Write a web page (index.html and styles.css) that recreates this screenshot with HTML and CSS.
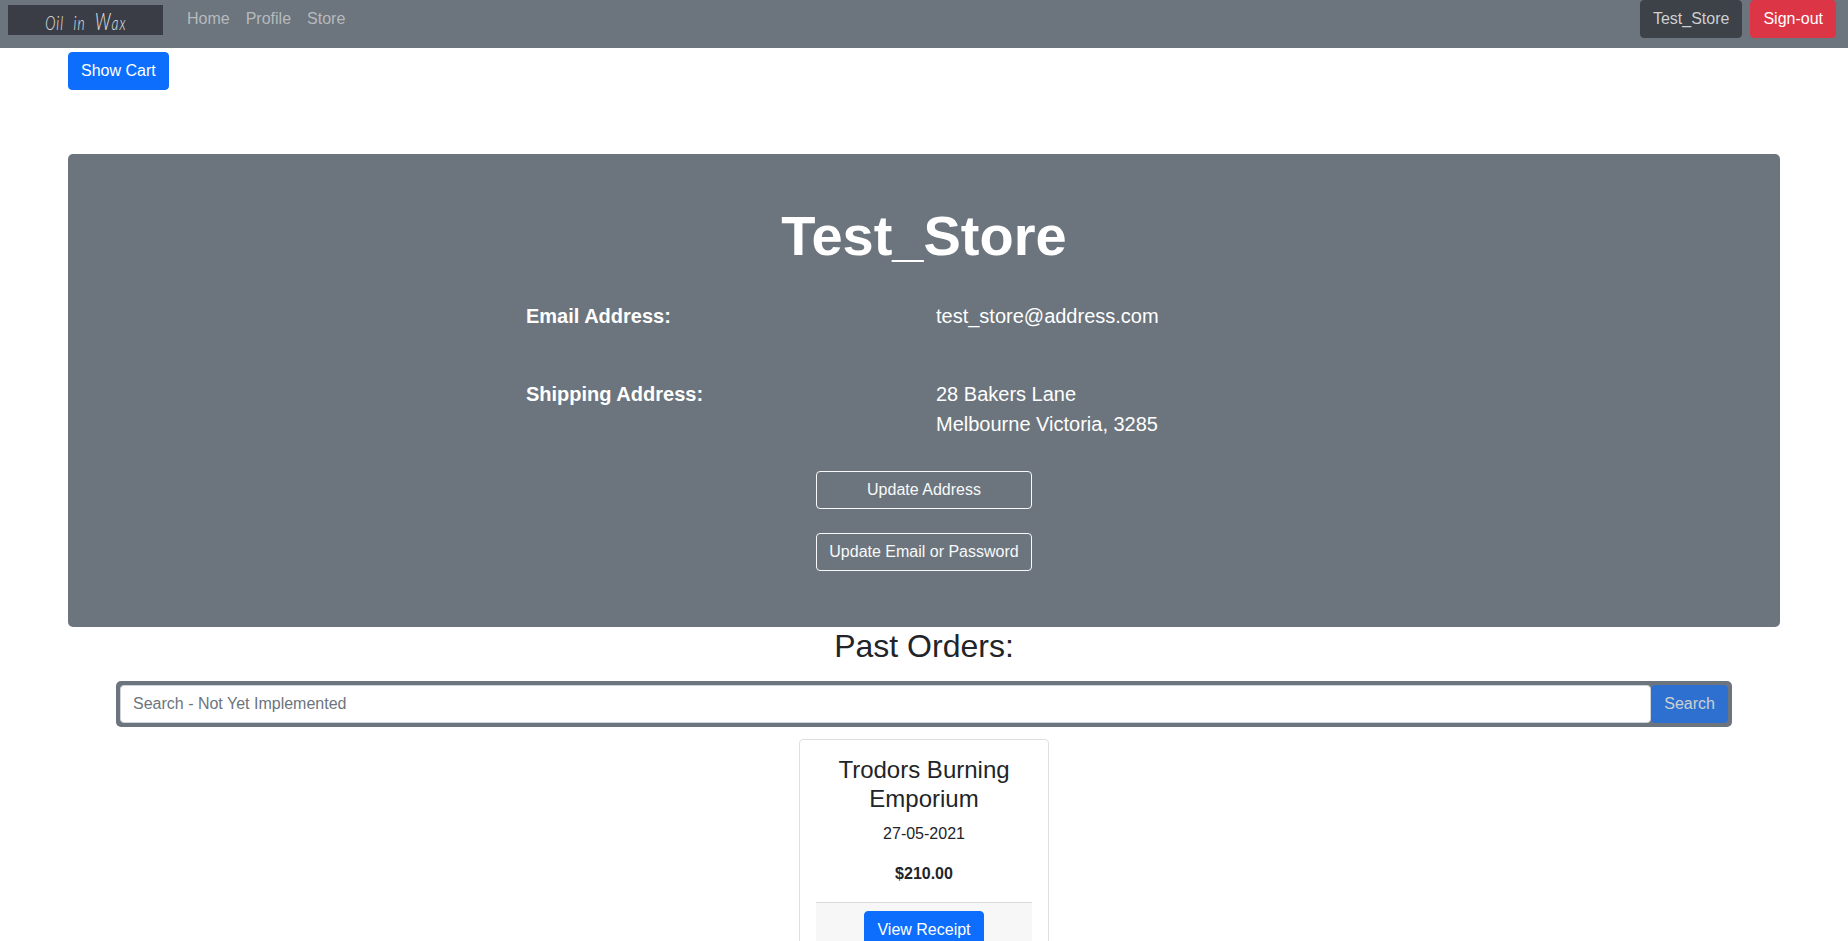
FILE: index.html
```
<!DOCTYPE html>
<html lang="en">
<head>
<meta charset="utf-8">
<title>Oil in Wax - Profile</title>
<link rel="stylesheet" href="styles.css">
</head>
<body>
<nav class="navbar">
  <a class="brand" href="#"><span class="brand-text">Oil in <span class="brand-initial">W</span>ax</span></a>
  <div class="nav-links">
    <a href="#">Home</a>
    <a href="#">Profile</a>
    <a href="#">Store</a>
  </div>
  <div class="nav-actions">
    <a class="btn btn-dark" href="#">Test_Store</a>
    <a class="btn btn-danger" href="#">Sign-out</a>
  </div>
</nav>
<main class="page">
  <div class="cart-row"><button class="btn btn-primary">Show Cart</button></div>
  <section class="profile">
    <h1>Test_Store</h1>
    <dl class="details">
      <dt>Email Address:</dt>
      <dd>test_store@address.com</dd>
      <dt>Shipping Address:</dt>
      <dd>28 Bakers Lane<br>Melbourne Victoria, 3285</dd>
    </dl>
    <div class="profile-actions">
      <a class="btn btn-outline" href="#">Update Address</a>
      <a class="btn btn-outline" href="#">Update Email or Password</a>
    </div>
  </section>
  <section class="orders">
    <h2>Past Orders:</h2>
    <form class="search">
      <input class="search-input" type="text" placeholder="Search - Not Yet Implemented">
      <button class="btn btn-primary search-btn" type="button" disabled>Search</button>
    </form>
    <article class="card">
      <h4>Trodors Burning Emporium</h4>
      <p>27-05-2021</p>
      <p class="price">$210.00</p>
      <div class="card-footer"><a class="btn btn-primary" href="#">View Receipt</a></div>
    </article>
  </section>
</main>
</body>
</html>
```
FILE: styles.css
```
*, *::before, *::after { box-sizing: border-box; }
html { height: 100%; overflow: hidden; }
body {
  margin: 0;
  height: 100%;
  overflow: hidden;
  background: #fff;
  color: #212529;
  font: 400 16px/24px "Liberation Sans", Arial, sans-serif;
}
a { text-decoration: none; color: inherit; }
h1, h2, h4, p, dl, dd { margin: 0; }

.btn {
  display: inline-block;
  padding: 6px 12px;
  border: 1px solid transparent;
  border-radius: 4px;
  font: inherit;
  text-align: center;
  white-space: nowrap;
}
.btn-primary { background: #0d6efd; border-color: #0d6efd; color: #fff; }
.btn-dark { background: #3d4148; border-color: #3d4148; color: #ced0d1; }
.btn-danger { background: #dc3545; border-color: #dc3545; color: #fff; }
.btn-outline { border-color: #f8f9fa; color: #f8f9fa; }

.navbar {
  display: flex;
  align-items: flex-start;
  height: 48px;
  padding: 0 12px 0 8px;
  background: #6c757d;
}
.brand {
  display: flex;
  align-items: center;
  justify-content: center;
  width: 155px;
  height: 30px;
  margin-top: 5px;
  padding-top: 3px;
  background: #3a3d46;
  color: #e6e6e6;
}
.brand-text {
  font: italic 300 20px/28px Lato, sans-serif;
  letter-spacing: 1.5px;
  word-spacing: 7px;
  white-space: nowrap;
  transform: scaleX(.69);
}
.brand-initial { font-size: 24px; line-height: 1; }
.nav-links {
  display: flex;
  gap: 16px;
  margin-left: 24px;
  padding-top: 7px;
  color: #b6babe;
}
.nav-actions { display: flex; gap: 8px; margin-left: auto; }

.page { padding: 4px 68px 0; }
.cart-row { display: flex; }
.profile {
  margin-top: 64px;
  height: 473px;
  padding: 48px;
  border-radius: 5px;
  background: #6c757d;
  color: #fff;
}
.profile h1 {
  font-size: 56px;
  line-height: 67px;
  text-align: center;
}
.details {
  display: grid;
  grid-template-columns: 410px 410px;
  row-gap: 48px;
  justify-content: center;
  margin-top: 32px;
  padding-left: 24px;
  font-size: 20px;
  line-height: 30px;
}
.details dt { font-weight: 700; }
.profile-actions {
  display: grid;
  gap: 24px;
  justify-content: center;
  margin-top: 32px;
}

.orders { padding: 0 48px; text-align: center; }
.orders h2 { font-size: 32px; font-weight: 400; line-height: 38px; }
.search {
  display: flex;
  margin-top: 16px;
  padding: 4px;
  border-radius: 5px;
  background: #6c757d;
}
.search-input {
  flex: 1;
  height: 38px;
  padding: 6px 12px;
  border: 1px solid #ced4da;
  border-radius: 4px;
  font: inherit;
}
.search-input::placeholder { color: #6c757d; opacity: 1; }
.search-btn { opacity: .65; }
.card {
  width: 250px;
  margin: 12px auto 0;
  padding: 16px;
  border: 1px solid #dfdfdf;
  border-radius: 4px;
}
.card h4 { margin-bottom: 8px; font-size: 24px; font-weight: 400; line-height: 28.8px; }
.card p { margin-bottom: 16px; }
.card .price { font-weight: 700; }
.card-footer { padding: 8px 16px; border-top: 1px solid #d8d8d8; background: #f7f7f7; }
```
